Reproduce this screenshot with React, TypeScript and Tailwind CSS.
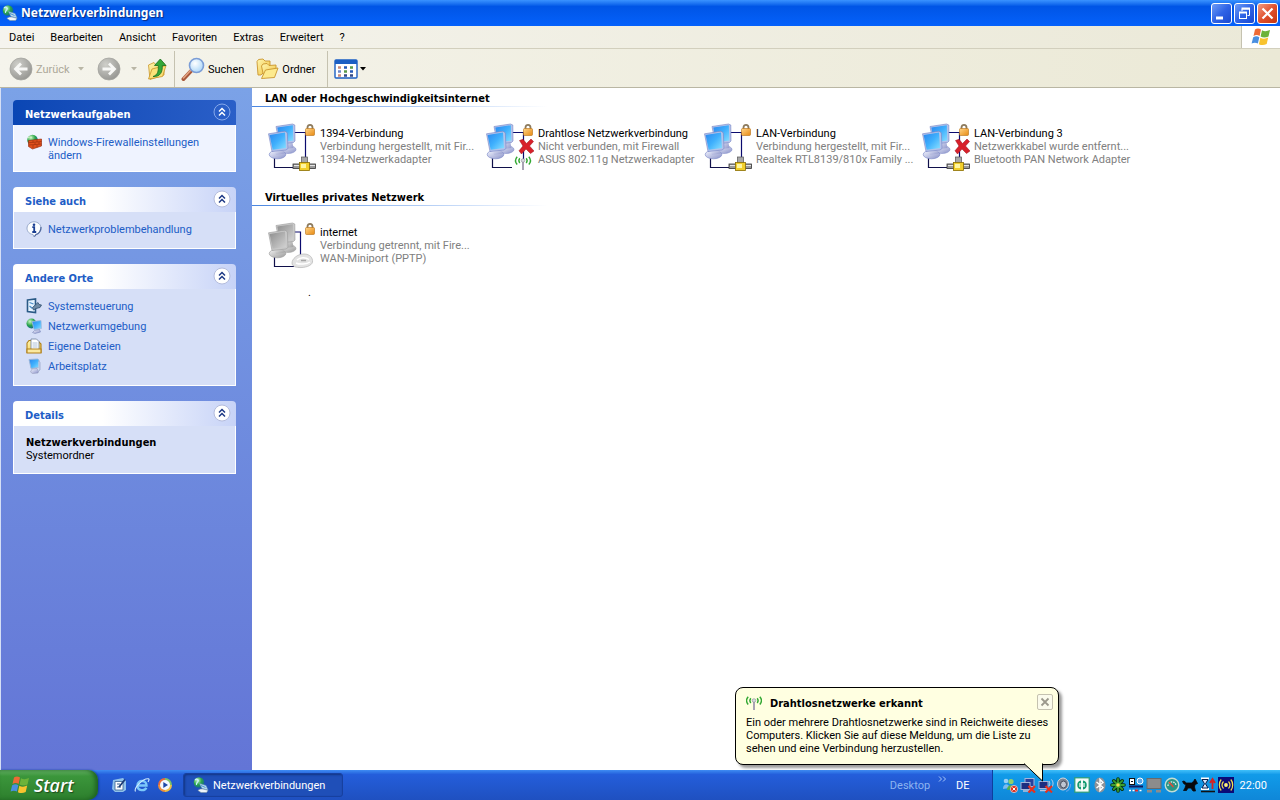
import type { ReactNode } from "react";

const menuItems = ["Datei", "Bearbeiten", "Ansicht", "Favoriten", "Extras", "Erweitert", "?"];

type Adapter = "cable" | "wireless" | "modem";

type Connection = {
  name: string;
  status: string;
  device: string;
  adapter: Adapter;
  error?: boolean;
};

const lanConnections: Connection[] = [
  { name: "1394-Verbindung", status: "Verbindung hergestellt, mit Fir...", device: "1394-Netzwerkadapter", adapter: "cable" },
  { name: "Drahtlose Netzwerkverbindung", status: "Nicht verbunden, mit Firewall", device: "ASUS 802.11g Netzwerkadapter", adapter: "wireless", error: true },
  { name: "LAN-Verbindung", status: "Verbindung hergestellt, mit Fir...", device: "Realtek RTL8139/810x Family ...", adapter: "cable" },
  { name: "LAN-Verbindung 3", status: "Netzwerkkabel wurde entfernt...", device: "Bluetooth PAN Network Adapter", adapter: "cable", error: true },
];

const vpnConnections: Connection[] = [
  { name: "internet", status: "Verbindung getrennt, mit Fire...", device: "WAN-Miniport (PPTP)", adapter: "modem" },
];

const Gradients = () => (
  <svg className="absolute size-0" aria-hidden="true">
    <defs>
      <linearGradient id="screen" x1="0" y1="0" x2="1" y2="1">
        <stop offset="0" stopColor="#2b86ee" />
        <stop offset="0.5" stopColor="#3fb0fd" />
        <stop offset="1" stopColor="#8be0ff" />
      </linearGradient>
      <linearGradient id="screenOff" x1="0" y1="0" x2="1" y2="1">
        <stop offset="0" stopColor="#8d8d8d" />
        <stop offset="1" stopColor="#d4d4d4" />
      </linearGradient>
      <linearGradient id="stand" x1="0" y1="0" x2="1" y2="1">
        <stop offset="0" stopColor="#f4f6ff" />
        <stop offset="1" stopColor="#8b93c9" />
      </linearGradient>
      <linearGradient id="standOff" x1="0" y1="0" x2="1" y2="1">
        <stop offset="0" stopColor="#f2f2f2" />
        <stop offset="1" stopColor="#9a9a9a" />
      </linearGradient>
      <linearGradient id="lockBody" x1="0" y1="0" x2="1" y2="1">
        <stop offset="0" stopColor="#ffd487" />
        <stop offset="1" stopColor="#e88a12" />
      </linearGradient>
      <linearGradient id="folder" x1="0" y1="0" x2="1" y2="1">
        <stop offset="0" stopColor="#fff7b0" />
        <stop offset="1" stopColor="#f1bf3c" />
      </linearGradient>
      <radialGradient id="grayBall" cx="0.35" cy="0.3" r="0.8">
        <stop offset="0" stopColor="#cfcfca" />
        <stop offset="1" stopColor="#92928e" />
      </radialGradient>
      <radialGradient id="globe" cx="0.35" cy="0.3" r="0.8">
        <stop offset="0" stopColor="#c8f5c0" />
        <stop offset="0.5" stopColor="#2aa54a" />
        <stop offset="1" stopColor="#0d5a9a" />
      </radialGradient>
      <radialGradient id="lens" cx="0.4" cy="0.35" r="0.7">
        <stop offset="0" stopColor="#ffffff" />
        <stop offset="1" stopColor="#a9d5f8" />
      </radialGradient>
    </defs>
  </svg>
);

const Flag = ({ className }: { className: string }) => (
  <svg viewBox="0 0 20 18" className={className} aria-hidden="true">
    <path d="M4 1.500C6 .2 8.200 .3 10 1.600L8.600 8C6.800 6.800 4.600 6.800 2.500 8Z" fill="#ee6a35" />
    <path d="M11 2.200C13.200 3.500 15.800 3.500 19 2L17.500 8.400C14.800 9.900 12 9.800 9.600 8.500Z" fill="#6cb33a" />
    <path d="M2.200 9.200C4.500 8 6.600 8.100 8.300 9.200L6.900 15.600C5 14.400 2.800 14.400 .6 15.600Z" fill="#4a8fe0" />
    <path d="M9.300 9.700C11.600 11 14.400 11 17.200 9.600L15.700 16C13 17.500 10.200 17.300 7.900 16.200Z" fill="#f8c32f" />
  </svg>
);

const NetworkGlobe = ({ className = "size-4" }: { className?: string }) => (
  <svg viewBox="0 0 16 16" className={className} aria-hidden="true">
    <circle cx="6" cy="5.500" r="5.300" fill="url(#globe)" />
    <path d="M2 3C4 1 6 3 5 4.500S3 6 3.500 8" fill="none" stroke="#c9f2ff" strokeWidth="1.200" />
    <path d="M6.500 6.500 13 8.500 15 13 9 11.500Z" fill="#b9dcf3" stroke="#6b97b8" strokeWidth=".6" />
    <path d="M5 13.500C6.500 11.500 10 11.500 15 13.500L13.500 15.500H8Z" fill="#eef5fa" stroke="#7995a8" strokeWidth=".6" />
    <path d="M8 8.500 12.500 10.500" stroke="#4b93cf" />
  </svg>
);

const Waves = ({ x = 0, y = 0 }: { x?: number; y?: number }) => (
  <g transform={`translate(${x} ${y})`}>
    <path d="M8 5V14" stroke="#a9a3b4" strokeWidth="2" />
    <circle cx="8" cy="4.500" r="1.800" fill="#d8d8de" stroke="#8a8a95" strokeWidth=".6" />
    <g fill="none" stroke="#33a833" strokeWidth="1.400">
      <path d="M4.800 2.200C3.700 3.600 3.700 5.600 4.800 7" />
      <path d="M2.200 .7C.2 3 .2 6.200 2.200 8.500" />
      <path d="M11.200 2.200C12.300 3.600 12.300 5.600 11.200 7" />
      <path d="M13.800 .7C15.800 3 15.800 6.200 13.800 8.500" />
    </g>
  </g>
);

const ConnectionIcon = ({ adapter, error }: { adapter: Adapter; error?: boolean }) => {
  const off = adapter === "modem";
  const screen = off ? "url(#screenOff)" : "url(#screen)";
  const stand = off ? "url(#standOff)" : "url(#stand)";
  const frame = off ? "#c9c9c9" : "#b4c3ea";
  const edge = off ? "#9a9a9a" : "#7683c4";
  return (
    <svg viewBox="0 0 48 48" className="size-12 shrink-0" aria-hidden="true">
      <path d={off ? "M26 10H32.500V34" : "M26 9.500H37.500V36"} fill="none" stroke="#0b0b6e" strokeWidth="1.200" />
      <path d="M6.500 34V44.500H26" fill="none" stroke="#10104a" strokeWidth="1.200" />
      <ellipse cx="20" cy="26.500" rx="8" ry="4" fill={stand} stroke={edge} strokeWidth=".5" />
      <path d="M16 18 24 17 25.500 25 18 26Z" fill={stand} />
      <path d="M8 3.500 24.500 1 26.800 2 27 18 25.500 19.500 11.500 21Z" fill={frame} stroke={edge} strokeWidth=".6" />
      <path d="M9.300 4.600 24.800 2.200 25.300 17.600 12 19.200Z" fill={screen} />
      <ellipse cx="9.500" cy="31.500" rx="8.300" ry="4.300" fill={stand} stroke={edge} strokeWidth=".6" />
      <path d="M6 27 15 26 16.500 30.500 8 32Z" fill={stand} />
      <path d="M.5 10.800 17 8.200 19.300 9.800 20 25.500 18 27 4 28.500Z" fill={frame} stroke={edge} strokeWidth=".6" />
      <path d="M1.600 11.900 17 9.600 18 24.900 4.700 26.700Z" fill={screen} />
      <path d="M39.500 7V4.500C39.500 1 44.500 1 44.500 4.500V7" fill="none" stroke="#8c7a5c" strokeWidth="1.800" />
      <rect x="37.500" y="5.500" width="9" height="7" rx="1" fill="url(#lockBody)" stroke="#b56f15" strokeWidth=".6" />
      {error && (
        <path d="M33.500 17.500 37 16.300 40.500 20.500 45 16 47.500 18.500 43.500 23 48 28 44.500 30.500 40 26 35.500 31 33 27.800 37 23Z" fill="#d8202a" stroke="#981018" strokeWidth=".5" />
      )}
      {adapter === "cable" && (
        <g>
          <rect x="33.500" y="34" width="6" height="7" fill="#a8a8a8" stroke="#555" strokeWidth=".7" />
          <rect x="25" y="41" width="22.500" height="4.500" fill="#9a9a9a" stroke="#333" strokeWidth=".8" />
          <path d="M26 42.500H47" stroke="#e5e5e5" />
          <rect x="31.500" y="39.500" width="10" height="8" fill="#f2cf2b" stroke="#8a6d00" strokeWidth=".8" />
          <rect x="33" y="41" width="5" height="4" fill="#fff6a0" />
        </g>
      )}
      {adapter === "wireless" && <Waves x={29} y={33} />}
      {off && (
        <g>
          <path d="M24 41C24 37 29 32 36 32C42 32 45 36 44.500 40C44 44 36 46 31 45.500C27 45.300 24 44 24 41Z" fill="#e3e3e3" stroke="#b5b5b5" strokeWidth=".7" />
          <path d="M29 38C32 35 38 35 41 37.500M28 41C32 43 39 42 42 40" fill="none" stroke="#ffffff" strokeWidth="1.500" />
          <path d="M33 38.500H38" stroke="#a5a5a5" strokeWidth="1.500" />
        </g>
      )}
    </svg>
  );
};

const ConnectionItem = ({ item }: { item: Connection }) => (
  <li className="flex w-[218px] gap-1">
    <ConnectionIcon adapter={item.adapter} error={item.error} />
    <div className="whitespace-nowrap pt-1 text-[#808080]">
      <p className="text-black">{item.name}</p>
      <p>{item.status}</p>
      <p>{item.device}</p>
    </div>
  </li>
);

const ConnectionGroup = ({ title, items }: { title: string; items: Connection[] }) => (
  <section className="pb-4">
    <h2 className="px-[13px] pt-1 pb-px font-['DejaVu_Sans_Condensed',sans-serif] font-bold">{title}</h2>
    <div className="h-px w-[296px] bg-linear-to-r from-[#4a86e0] to-white" />
    <ul className="flex flex-wrap px-4 pt-4">
      {items.map((item) => (
        <ConnectionItem key={item.name} item={item} />
      ))}
    </ul>
  </section>
);

const CollapseButton = ({ title, primary }: { title: string; primary?: boolean }) => (
  <button type="button" aria-label={`${title} einklappen`} className="mb-[2px] size-[18px]">
    <svg viewBox="0 0 18 18" className="size-[18px]">
      <circle cx="9" cy="9" r="8" fill={primary ? "#2a5fc8" : "#ffffff"} stroke={primary ? "#86a8ea" : "#b4bcdc"} />
      <path d="M6 8.500 9 5.500 12 8.500M6 12.500 9 9.500 12 12.500" fill="none" stroke={primary ? "#ffffff" : "#1f3a86"} strokeWidth="1.500" />
    </svg>
  </button>
);

const TaskPanel = ({ title, primary, children }: { title: string; primary?: boolean; children: ReactNode }) => (
  <section>
    <h2
      className={
        primary
          ? "flex h-[25px] items-center justify-between rounded-t bg-linear-to-r from-[#0a46b4] to-[#2a5fc8] pr-[5px] pl-3 font-['DejaVu_Sans_Condensed',sans-serif] font-bold text-white"
          : "flex h-[25px] items-center justify-between rounded-t bg-linear-to-r from-white from-40% to-[#c7d3f7] pr-[5px] pl-3 font-['DejaVu_Sans_Condensed',sans-serif] font-bold text-[#215dc6]"
      }
    >
      <span className="pt-[3px]">{title}</span>
      <CollapseButton title={title} primary={primary} />
    </h2>
    <div
      className={
        primary
          ? "border border-t-0 border-white bg-[#eff3ff] px-3 pt-[9px] pb-2"
          : "border border-t-0 border-white bg-[#d6dff7] px-3 pt-[9px] pb-[11px]"
      }
    >
      {children}
    </div>
  </section>
);

const TaskLink = ({ icon, children }: { icon: ReactNode; children: ReactNode }) => (
  <li>
    <a href="#" className="flex gap-[6px] text-[#215dc6]">
      <svg viewBox="0 0 16 16" className="size-4 shrink-0" aria-hidden="true">
        {icon}
      </svg>
      <span className="pt-[2px] pb-px">{children}</span>
    </a>
  </li>
);

const firewallIcon = (
  <>
    <circle cx="6.500" cy="6" r="5.300" fill="url(#globe)" />
    <path d="M2 4C4 2 5 4 6 3" stroke="#d9f6c6" fill="none" />
    <path d="M2.500 6.500 15.500 5V12L6.500 15 2.500 12.500Z" fill="#e2501c" stroke="#8c2408" strokeWidth=".6" />
    <path d="M3 8.700 15.500 7.500M3 11 15.500 10M7 6.500V8.500M11 6V8M9 8.500V10.500M13 8V10.300M7 11V14M11 10.700V13.500" stroke="#9c3010" strokeWidth=".7" />
  </>
);

const infoIcon = (
  <>
    <path d="M8 .8C12 .8 15 3.600 15 7.200S12.500 13 10 13.500L8 16 7 13.500C3.500 13 1 10.600 1 7.200S4 .8 8 .8Z" fill="#fbfdff" stroke="#8da0c4" strokeWidth=".9" />
    <path d="M15 6C15.200 10 12.500 13 10 13.500L8.500 15.500" fill="none" stroke="#51699f" strokeWidth="1.200" />
    <circle cx="8" cy="3.700" r="1.300" fill="#1b3f93" />
    <path d="M6.300 6.200H8.200V10.800M6.300 11H10.200" fill="none" stroke="#1b3f93" strokeWidth="1.800" />
  </>
);

const controlPanelIcon = (
  <>
    <path d="M1.500 2 9.500 1V14.500L1.500 13.500Z" fill="#e5f3ff" stroke="#2a5a86" strokeWidth="1.600" />
    <path d="M3.500 4.500 7.500 6M3.500 8 6.500 10.500" stroke="#4b8cc6" strokeWidth="1.300" />
    <path d="M6.500 9.500 12 4.500 13 6.500 15.500 7 14 9.500 10 10.500 7.500 12Z" fill="#6f8ba6" stroke="#2f4f70" strokeWidth=".8" />
  </>
);

const networkPlacesIcon = (
  <>
    <circle cx="5.500" cy="5.500" r="5" fill="url(#globe)" />
    <path d="M6 3.500 15 2.500 15.500 10.500 8 11.500Z" fill="url(#screen)" stroke="#a3bbdd" strokeWidth=".8" />
    <path d="M8.500 12.500 13.500 11.500 14.500 14 9 15.500 6.500 14.500Z" fill="url(#stand)" stroke="#6c7bb0" strokeWidth=".5" />
  </>
);

const documentsIcon = (
  <>
    <path d="M1 5 3 2.500H6L7 4H13L15 6V14.500H1Z" fill="url(#folder)" stroke="#b1801a" strokeWidth="1.100" />
    <path d="M5 1H10.500L13 3.500V12H5Z" fill="#ffffff" stroke="#6d7d9c" strokeWidth=".8" />
    <path d="M6.500 5H11.500M6.500 7H11.500M6.500 9H11.500" stroke="#9db2d1" strokeWidth=".8" />
    <path d="M1 11H15V15H1Z" fill="#fbe9a0" stroke="#b1801a" strokeWidth="1.100" />
  </>
);

const computerIcon = (
  <>
    <path d="M3 1.500 11.500 1 13 2V9.500L5 10.500Z" fill="url(#screen)" stroke="#9db5d8" strokeWidth=".9" />
    <path d="M6 11 11 10.500 12.500 13 12 15 6.500 15.500 4.500 14Z" fill="url(#stand)" stroke="#8c93b0" strokeWidth=".5" />
    <path d="M12.500 3 14 4.500V12L12.500 13" fill="#c9d3ea" stroke="#8b99bd" strokeWidth=".6" />
  </>
);

const TitleBar = () => (
  <header className="flex h-[26px] items-center justify-between bg-linear-to-b from-[#3a93ff] via-[#0055e6] via-25% to-[#0561fb] px-[2px]">
    <div className="flex items-center gap-[3px]">
      <NetworkGlobe />
      <h1 className="font-['Noto_Sans',sans-serif] text-[12px] leading-4 font-bold text-white [text-shadow:1px_1px_1px_#0a2a80]">
        Netzwerkverbindungen
      </h1>
    </div>
    <div className="flex gap-[2px]">
      <button type="button" aria-label="Minimieren" className="size-[21px] rounded-[3px] border border-white bg-linear-to-br from-[#6f9bf5] via-[#2f63e6] to-[#1a48cf]">
        <svg viewBox="0 0 19 19"><path d="M4 14H11" stroke="#fff" strokeWidth="3" /></svg>
      </button>
      <button type="button" aria-label="Wiederherstellen" className="size-[21px] rounded-[3px] border border-white bg-linear-to-br from-[#6f9bf5] via-[#2f63e6] to-[#1a48cf]">
        <svg viewBox="0 0 19 19" fill="none" stroke="#fff">
          <path d="M7 7V5H14.500V11.500H12.500" />
          <path d="M6.500 4.500H15" strokeWidth="2" />
          <rect x="4.500" y="8.500" width="7" height="6" />
          <path d="M4 8.500H12" strokeWidth="2" />
        </svg>
      </button>
      <button type="button" aria-label="Schließen" className="size-[21px] rounded-[3px] border border-white bg-linear-to-br from-[#f09a80] via-[#e0502c] to-[#c43510]">
        <svg viewBox="0 0 19 19"><path d="M4.500 4.500 14.500 14.500M14.500 4.500 4.500 14.500" stroke="#fff" strokeWidth="2.200" /></svg>
      </button>
    </div>
  </header>
);

const Caret = ({ color }: { color: string }) => (
  <svg viewBox="0 0 6 4" className="h-1 w-[6px]" aria-hidden="true">
    <path d="M0 0H6L3 3.500Z" fill={color} />
  </svg>
);

const NavArrow = ({ forward }: { forward?: boolean }) => (
  <svg viewBox="0 0 24 24" className="size-6" aria-hidden="true">
    <circle cx="12" cy="12" r="11" fill="url(#grayBall)" stroke="#a5a5a0" strokeWidth=".8" />
    <path
      d={forward ? "M5.500 12H17M12 6.500 17.500 12 12 17.500" : "M18.500 12H7M12 6.500 6.500 12 12 17.500"}
      fill="none"
      stroke="#f7f7f5"
      strokeWidth="2.800"
    />
  </svg>
);

const Toolbar = () => (
  <div className="flex h-[39px] items-stretch border-b border-[#b9b6a3] bg-linear-to-r from-[#f5f4ec] to-[#ebe9d6] pt-[2px] pl-[9px]">
    <div className="flex w-[166px] items-center border-r border-[#c5c2b0]">
      <button type="button" disabled className="flex items-center gap-[3px] text-[#aca899]">
        <NavArrow />
        Zurück
      </button>
      <div className="flex flex-1 items-center justify-between pr-[7px] pl-2">
        <Caret color="#b9b6a6" />
        <button type="button" disabled aria-label="Vorwärts" className="ml-1">
          <NavArrow forward />
        </button>
        <Caret color="#b9b6a6" />
        <button type="button" aria-label="Aufwärts">
          <svg viewBox="0 0 20 24" className="h-6 w-5">
            <path d="M1.500 8 7 5.500 9 8 17 6V18L3 22.500Z" fill="url(#folder)" stroke="#c9952c" strokeWidth=".8" />
            <path d="M1.500 22 5 12 19 8.500 15.500 19.500Z" fill="#fbe178" stroke="#c9952c" strokeWidth=".8" />
            <path d="M6 19.500C11 18 11.500 14 11.300 8.500H7.500L13.300 2 19 8.500H15.300C15.600 15 13.500 20 6 19.500Z" fill="#35a838" stroke="#1b6f20" strokeWidth=".8" />
          </svg>
        </button>
      </div>
    </div>
    <div className="flex w-[153px] items-center gap-[11px] border-r border-[#c5c2b0] pl-[6px]">
      <button type="button" className="flex items-center gap-[3px]">
        <svg viewBox="0 0 24 24" className="size-6" aria-hidden="true">
          <path d="M10.500 13.500 2.500 22" stroke="#a8583a" strokeWidth="4" strokeLinecap="round" />
          <path d="M9.500 13.500 2.500 21" stroke="#e3a583" strokeWidth="1.500" strokeLinecap="round" />
          <circle cx="15.500" cy="8.500" r="7" fill="url(#lens)" stroke="#7b9dd6" strokeWidth="1.600" />
        </svg>
        Suchen
      </button>
      <button type="button" className="flex items-center gap-[3px]">
        <svg viewBox="0 0 24 24" className="size-6" aria-hidden="true">
          <path d="M2 4.500 3.500 2.500 8 2 10 4H15V9L6 18H3Z" fill="url(#folder)" stroke="#c9952c" strokeWidth=".9" />
          <path d="M6.500 9 8 7 12 6.500 14 8.500 21 8V13L9 21Z" fill="url(#folder)" stroke="#c9952c" strokeWidth=".9" />
          <path d="M6.500 21.500 10.500 13 23 11 19.500 20.500Z" fill="#fdea8e" stroke="#c9952c" strokeWidth=".9" />
        </svg>
        Ordner
      </button>
    </div>
    <button type="button" aria-label="Ansichten" className="flex items-center gap-[2px] pl-[6px]">
      <svg viewBox="0 0 24 20" className="h-5 w-6">
        <rect x="1" y="1" width="22" height="18" rx="1" fill="#fff" stroke="#1b5fc4" strokeWidth="1.400" />
        <rect x="1" y="1" width="22" height="4" fill="#1b5fc4" />
        <path d="M4 8.500H7M4 16.500H7" stroke="#c98a7a" strokeWidth="2.500" />
        <path d="M4 12.500H7" stroke="#6e88c8" strokeWidth="2.500" />
        <path d="M10 8.500H13M16 12.500H19" stroke="#2459b8" strokeWidth="2.500" />
        <path d="M10 12.500H13M16 8.500H19" stroke="#5a9a4a" strokeWidth="2.500" />
        <path d="M10 16.500H13M16 16.500H19" stroke="#334a86" strokeWidth="2.500" />
      </svg>
      <Caret color="#000" />
    </button>
  </div>
);

const Sidebar = () => (
  <aside className="w-[252px] shrink-0 space-y-[15px] border-l border-[#d5dff5] bg-linear-to-b from-[#7ba2e7] to-[#6375d6] pt-3 pr-4 pl-3">
    <TaskPanel title="Netzwerkaufgaben" primary>
      <ul>
        <TaskLink icon={firewallIcon}>
          Windows-Firewalleinstellungen
          <br />
          ändern
        </TaskLink>
      </ul>
    </TaskPanel>
    <TaskPanel title="Siehe auch">
      <ul>
        <TaskLink icon={infoIcon}>Netzwerkproblembehandlung</TaskLink>
      </ul>
    </TaskPanel>
    <TaskPanel title="Andere Orte">
      <ul className="space-y-1">
        <TaskLink icon={controlPanelIcon}>Systemsteuerung</TaskLink>
        <TaskLink icon={networkPlacesIcon}>Netzwerkumgebung</TaskLink>
        <TaskLink icon={documentsIcon}>Eigene Dateien</TaskLink>
        <TaskLink icon={computerIcon}>Arbeitsplatz</TaskLink>
      </ul>
    </TaskPanel>
    <TaskPanel title="Details">
      <p className="pt-px font-['DejaVu_Sans_Condensed',sans-serif] font-bold">Netzwerkverbindungen</p>
      <p>Systemordner</p>
    </TaskPanel>
  </aside>
);

const trayIcons: { label: string; art: ReactNode }[] = [
  {
    label: "Messenger",
    art: (
      <>
        <circle cx="4" cy="4" r="2.300" fill="#9ad0f5" />
        <path d="M1 12C1 6 7 6 7.500 11Z" fill="#7cbcf0" />
        <circle cx="9" cy="4.500" r="2.600" fill="#8fd06a" />
        <path d="M5 13C5 7 12 7 12.500 12Z" fill="#58b048" />
        <circle cx="12" cy="12" r="3.600" fill="#d8301f" stroke="#fff" strokeWidth=".6" />
        <path d="M10.500 10.500 13.500 13.500M13.500 10.500 10.500 13.500" stroke="#fff" />
      </>
    ),
  },
  {
    label: "LAN-Verbindung getrennt",
    art: (
      <>
        <rect x="5" y="1.500" width="9" height="8" fill="#28409c" stroke="#a5b4d8" />
        <rect x="1" y="5.500" width="9" height="7" fill="#1c2e80" stroke="#a5b4d8" />
        <path d="M3 14H9" stroke="#b8c2dc" strokeWidth="1.500" />
        <path d="M8.500 9 15 15.500M15 9 8.500 15.500" stroke="#e8301c" strokeWidth="2.200" />
      </>
    ),
  },
  {
    label: "Drahtlosnetzwerk",
    art: (
      <>
        <rect x="1" y="4.500" width="9" height="7" fill="#1c2e80" stroke="#a5b4d8" />
        <path d="M2 13.500H9" stroke="#b8c2dc" strokeWidth="1.500" />
        <path d="M11 4C12 6 12 7 11 9M13.500 2.500C15.500 5 15.500 8 13.500 10.500" fill="none" stroke="#cfd6e8" />
        <path d="M7.500 9 14 15.500M14 9 7.500 15.500" stroke="#e8301c" strokeWidth="2" />
      </>
    ),
  },
  {
    label: "Lautstärke",
    art: (
      <>
        <ellipse cx="7" cy="7" rx="5.500" ry="6" fill="#7d8594" stroke="#d3d8e0" />
        <ellipse cx="7.500" cy="7.500" rx="3" ry="3.500" fill="#bfc6d2" stroke="#454c5c" />
        <path d="M14.500 7C15 10 13 13.500 10 14.500" fill="none" stroke="#5fa0e8" strokeWidth="1.200" />
      </>
    ),
  },
  {
    label: "Synchronisierung",
    art: (
      <>
        <rect x=".8" y=".8" width="14.400" height="14.400" fill="#f3fbf7" stroke="#2a9c78" strokeWidth="1.200" />
        <path d="M7 3.500C2 3.500 2 12.500 7 12.500ZM9 3.500C14 3.500 14 12.500 9 12.500Z" fill="#159a70" />
        <path d="M6 6V10M10 6V10" stroke="#fff" strokeWidth="1.200" />
      </>
    ),
  },
  {
    label: "Bluetooth",
    art: (
      <>
        <ellipse cx="8" cy="8" rx="5.500" ry="7.500" fill="#8d9299" />
        <path d="M4.500 5 11 10.500 8 13.500V2.500L11 5.500 4.500 11" fill="none" stroke="#fff" strokeWidth="1.400" />
      </>
    ),
  },
  {
    label: "ICQ",
    art: (
      <>
        <path d="M8 2V14M2 8H14M3.800 3.800 12.200 12.200M12.200 3.800 3.800 12.200" stroke="#08330c" strokeWidth="3.600" strokeLinecap="round" />
        <path d="M8 2V14M2 8H14M3.800 3.800 12.200 12.200M12.200 3.800 3.800 12.200" stroke="#3a9e30" strokeWidth="1.800" strokeLinecap="round" />
        <circle cx="8" cy="8" r="1.800" fill="#f3e04a" />
      </>
    ),
  },
  {
    label: "Netzwerkmonitor",
    art: (
      <>
        <rect x="1.500" y="1.500" width="5" height="6" fill="#fff" stroke="#111" />
        <circle cx="12" cy="4" r="3" fill="#5aa5e8" stroke="#fff" />
        <path d="M3 4.500H5" stroke="#111" />
        <path d="M1 9.500H15" stroke="#111a60" strokeWidth="2" />
        <path d="M1 13.500H15" stroke="#fff" strokeWidth="1.500" strokeDasharray="2 1.500" />
        <path d="M7 13.500H10" stroke="#d82a2a" strokeWidth="2" />
      </>
    ),
  },
  {
    label: "Anzeige",
    art: (
      <>
        <rect x="1" y="1.500" width="14" height="10" fill="#8c8c8c" stroke="#6a6a6a" />
        <rect x="1" y="13" width="5" height="2.500" fill="#8c8c8c" />
        <rect x="10" y="13" width="5" height="2.500" fill="#8c8c8c" />
      </>
    ),
  },
  {
    label: "Leistung",
    art: (
      <>
        <circle cx="8" cy="8" r="6.800" fill="#2a9585" stroke="#c3ddd5" strokeWidth="1.400" />
        <path d="M4 9C4 3.500 12 3.500 12 9" fill="none" stroke="#e4f5ef" strokeWidth="1.300" strokeDasharray="1.500 1" />
        <path d="M5 5 9.500 10" stroke="#e94a35" strokeWidth="1.400" />
      </>
    ),
  },
  {
    label: "Terrier",
    art: <path d="M.5 4.500 2 7 4 7.500 3 11 1.500 13.500H4.500L6 11H9L11 14H13.500L12.500 10 13 7.500 15.500 6.500 14.500 4.500 13 2 11.500 4.500 9.500 6H4.500L2 4Z" fill="#08090c" stroke="#08090c" strokeWidth=".8" />,
  },
  {
    label: "Zeitplan",
    art: (
      <>
        <path d="M1 1.500H9M1 12H9" stroke="#fff" strokeWidth="2" />
        <path d="M2 2.500H8L5.500 6.800 8 11H2L4.500 6.800Z" fill="#d6e6fb" stroke="#0b1c4a" />
        <path d="M12.500 12V4M10 6 12.500 2 15 6" fill="none" stroke="#d8201f" strokeWidth="1.800" />
        <path d="M1 14.500H15" stroke="#111" strokeWidth="1.600" />
      </>
    ),
  },
  {
    label: "WLAN-Dienst",
    art: (
      <>
        <rect width="16" height="16" fill="#0a0a78" />
        <circle cx="8" cy="8" r="1.900" fill="#fff27a" />
        <path d="M5.500 4.500C3.800 6.500 3.800 9.500 5.500 11.500M10.500 4.500C12.200 6.500 12.200 9.500 10.500 11.500M3.200 2.500C.7 5.500 .7 10.500 3.200 13.500M12.800 2.500C15.300 5.500 15.300 10.500 12.800 13.500" fill="none" stroke="#f4e24c" strokeWidth="1.200" />
      </>
    ),
  },
];

const Taskbar = () => (
  <footer className="flex h-[30px] shrink-0 items-stretch bg-linear-to-b from-[#3f8cf3] via-[#245edb] via-15% to-[#1f50c0] text-white">
    <button
      type="button"
      className="flex w-[98px] items-center gap-1 rounded-r-[10px] bg-linear-to-b from-[#67b567] via-[#3b963b] via-20% to-[#2d7f2d] pl-[10px] font-['Noto_Sans',sans-serif] text-[18px] leading-5 font-medium italic shadow-[inset_-3px_0_4px_#1f6322,1px_0_2px_#123c9c] [text-shadow:1px_1px_1px_#1c4a1c]"
    >
      <Flag className="h-[18px] w-5" />
      Start
    </button>
    <div className="flex w-[85px] items-center gap-[7px] pl-[13px]">
      <button type="button" aria-label="Desktop anzeigen" className="size-4">
        <svg viewBox="0 0 16 16">
          <path d="M2 3 12 1 15 4V13L12 15H4L1 12Z" fill="#8fc1ea" />
          <path d="M4 4.500H12V13H4Z" fill="#fff" stroke="#35608f" strokeWidth=".8" />
          <path d="M6 7H9M6 10H10" stroke="#35608f" />
          <path d="M8 10 14 2.500" stroke="#1b3b78" strokeWidth="1.800" />
        </svg>
      </button>
      <button type="button" aria-label="Internet Explorer" className="size-4">
        <svg viewBox="0 0 16 16" fill="none">
          <path d="M3.500 8.500H12.500C12.500 2.500 3.500 2.500 3.500 8.500S11 14 12.300 10.800" stroke="#7cc8fa" strokeWidth="2.400" />
          <path d="M1.500 14.500C-.5 11 9 1 14.500 1.800C15.500 2.200 15 3.500 14 5" stroke="#d0ebfc" strokeWidth="1.100" />
        </svg>
      </button>
      <button type="button" aria-label="Media Player" className="size-4">
        <svg viewBox="0 0 16 16">
          <path d="M8 1A7 7 0 0 1 15 8H8Z" fill="#7cc36a" />
          <path d="M15 8A7 7 0 0 1 8 15V8Z" fill="#f0bf46" />
          <path d="M8 15A7 7 0 0 1 1 8H8Z" fill="#f08e3a" />
          <path d="M1 8A7 7 0 0 1 8 1V8Z" fill="#e86a3c" />
          <circle cx="8" cy="8" r="5" fill="#f4f8ff" />
          <path d="M6.300 5 11 8 6.300 11Z" fill="#1e48a8" />
        </svg>
      </button>
    </div>
    <button type="button" className="my-[3px] flex w-[160px] items-center gap-1 rounded-[3px] border border-[#17409f] bg-[#1f4fb8] pl-[9px] shadow-[inset_1px_1px_2px_#123584]">
      <NetworkGlobe />
      Netzwerkverbindungen
    </button>
    <div className="flex flex-1 items-center justify-end pr-[22px]">
      <span className="text-[#8db4f0]">Desktop</span>
      <button type="button" aria-label="Weitere Symbole" className="ml-2 pb-3">
        <svg viewBox="0 0 9 6" className="h-[6px] w-[9px]">
          <path d="M1 .5 3.500 3 1 5.500M5 .5 7.500 3 5 5.500" fill="none" stroke="#a9c8f8" />
        </svg>
      </button>
      <button type="button" className="ml-[9px]">DE</button>
    </div>
    <div className="flex items-center border-l border-[#0e3f9e] bg-linear-to-b from-[#3fc0fa] via-[#119be9] via-15% to-[#0f87d8] pr-[13px] pl-[9px]">
      <ul className="flex gap-[2px]">
        {trayIcons.map((icon) => (
          <li key={icon.label} className="size-4">
            <svg viewBox="0 0 16 16" role="img" aria-label={icon.label}>
              {icon.art}
            </svg>
          </li>
        ))}
      </ul>
      <time className="pl-[6px]">22:00</time>
    </div>
  </footer>
);

const Balloon = () => (
  <div role="status" className="absolute right-[221px] bottom-[35px] w-[324px] rounded-lg border border-black bg-[#ffffe1] px-[10px] pt-[6px] pb-[9px] shadow-[3px_3px_3px_rgba(0,0,0,0.4)]">
    <div className="flex items-center">
      <svg viewBox="0 0 16 16" className="size-4" aria-hidden="true">
        <Waves y={1} />
      </svg>
      <h2 className="flex-1 pl-2 font-['DejaVu_Sans_Condensed',sans-serif] font-bold">Drahtlosnetzwerke erkannt</h2>
      <button type="button" aria-label="Meldung schließen" className="-mr-[5px] mb-[2px] size-4 rounded-[2px] border border-[#c5c2b0] bg-[#fbfbec]">
        <svg viewBox="0 0 14 14">
          <path d="M3.500 3.500 10.500 10.500M10.500 3.500 3.500 10.500" stroke="#9b988c" strokeWidth="1.800" />
        </svg>
      </button>
    </div>
    <p className="pt-1 whitespace-nowrap">
      Ein oder mehrere Drahtlosnetzwerke sind in Reichweite dieses
      <br />
      Computers. Klicken Sie auf diese Meldung, um die Liste zu
      <br />
      sehen und eine Verbindung herzustellen.
    </p>
    <svg viewBox="0 0 22 20" className="absolute right-[13px] -bottom-[19px] h-5 w-[22px]" aria-hidden="true">
      <path d="M1 0V.5L19.500 18V0Z" fill="#ffffe1" />
      <path d="M1 .5 19.500 18V.5" fill="none" stroke="#000" />
    </svg>
  </div>
);

const App = () => {
  return (
    <div className="relative flex min-h-screen flex-col bg-white font-[Roboto,sans-serif] text-[11px] leading-[13px] text-black">
      <Gradients />
      <TitleBar />
      <nav className="flex h-[23px] items-stretch border-b border-[#d2cfbd] bg-linear-to-r from-[#f5f4ee] to-[#ebe9d8]">
        <ul className="flex flex-1 items-center gap-4 pl-[9px]">
          {menuItems.map((item) => (
            <li key={item}>
              <button type="button">{item}</button>
            </li>
          ))}
        </ul>
        <div className="flex w-[39px] items-center justify-center border-l border-[#c5c2b0] bg-white">
          <Flag className="h-[18px] w-5" />
        </div>
      </nav>
      <Toolbar />
      <div className="flex flex-1">
        <Sidebar />
        <main className="flex-1">
          <ConnectionGroup title="LAN oder Hochgeschwindigkeitsinternet" items={lanConnections} />
          <ConnectionGroup title="Virtuelles privates Netzwerk" items={vpnConnections} />
          <p className="pl-14">.</p>
        </main>
      </div>
      <Taskbar />
      <Balloon />
    </div>
  );
};

export default App;
